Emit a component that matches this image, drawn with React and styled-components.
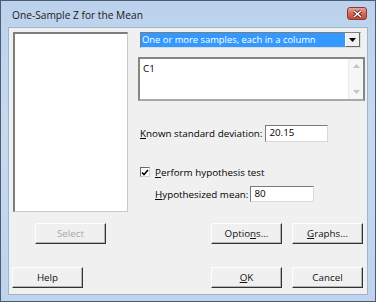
import React from 'react';
import styled, { createGlobalStyle } from 'styled-components';

const Global = createGlobalStyle`
  html, body { margin: 0; padding: 0; background: #fff; }
  * { box-sizing: border-box; }
`;

const Window = styled.div`
  width: 376px;
  height: 302px;
  border: 1px solid #4a5d75;
  background: linear-gradient(#bcd2ec, #c6d9ef 40%, #bfd4ec);
  padding: 0 7px 6px 7px;
  display: flex;
  flex-direction: column;
  font-family: "Open Sans", "Noto Sans", sans-serif;
  font-size: 9.8px;
  color: #000;
`;

const TitleBar = styled.div`
  height: 26px;
  display: flex;
  align-items: center;
  padding-left: 4px;
  padding-right: 1px;
`;

const Title = styled.div`
  flex: 1;
  font-size: 10.2px;
  color: #1a1a1a;
  margin-top: 1px;
`;

const CloseBtn = styled.div`
  width: 20px;
  height: 13px;
  margin-top: -1px;
  border: 1px solid #8a3a34;
  border-radius: 3px;
  background: linear-gradient(#e8a699, #d26a5a 50%, #c44b3a);
  display: flex;
  align-items: center;
  justify-content: center;
`;

const Client = styled.div`
  flex: 1;
  background: #f0f0f0;
  border: 1px solid #9fb4cd;
  display: flex;
  flex-direction: column;
`;

const Main = styled.div`
  display: grid;
  grid-template-columns: 115px 227px;
  column-gap: 10px;
  padding: 4px 2px 0 4px;
`;

const ListBox = styled.div`
  height: 180px;
  background: #fff;
  border-style: solid;
  border-width: 2px 1px 1px 2px;
  border-color: #7d7d7d #c8c8c8 #c8c8c8 #7d7d7d;
`;

const Right = styled.div`
  display: flex;
  flex-direction: column;
`;

const Combo = styled.div`
  margin-left: 2px;
  width: 221px;
  height: 16px;
  display: flex;
  background: #fff;
  border-style: solid;
  border-width: 1px;
  border-color: #7d7d7d #dcdcdc #dcdcdc #7d7d7d;
`;

const ComboText = styled.div`
  flex: 1;
  background: #3399ff;
  color: #fff;
  font-size: 9.4px;
  line-height: 14px;
  padding-left: 1px;
  white-space: nowrap;
  overflow: hidden;
`;

const ComboBtn = styled.div`
  width: 15px;
  background: #f0f0f0;
  border-left: 1px solid #fff;
  border-right: 1px solid #6a6a6a;
  border-bottom: 1px solid #6a6a6a;
  display: flex;
  align-items: center;
  justify-content: center;
`;

const Memo = styled.div`
  margin-top: 9px;
  height: 44px;
  background: #fff;
  border: 2px solid #858585;
  border-bottom-color: #a8a8a8;
  display: flex;
`;

const MemoText = styled.div`
  flex: 1;
  padding: 3px 0 0 3px;
`;

const ScrollBar = styled.div`
  width: 15px;
  background: #f6f6f6;
  border-left: 1px solid #ececec;
  display: flex;
  flex-direction: column;
  justify-content: space-between;
  align-items: center;
  padding: 5px 0 5px;
`;

const Row = styled.div`
  display: flex;
  align-items: center;
  margin-top: ${p => p.$top}px;
  padding-left: ${p => p.$indent}px;
  height: ${p => p.$h}px;
`;

const Field = styled.div`
  width: ${p => p.$w}px;
  height: 100%;
  margin-left: ${p => p.$gap}px;
  background: #fff;
  border-style: solid;
  border-width: 1px;
  border-color: #7a7a7a #d8d8d8 #d8d8d8 #7a7a7a;
  padding-left: 3px;
  line-height: 14px;
`;

const CheckBox = styled.div`
  width: 10px;
  height: 10px;
  background: #fff;
  border-style: solid;
  border-width: 1px;
  border-color: #6a6a6a #d0d0d0 #d0d0d0 #6a6a6a;
  margin-right: 5px;
  display: flex;
  align-items: center;
  justify-content: center;
`;

const ButtonRow = styled.div`
  display: flex;
  gap: 10px;
  margin-top: ${p => p.$top}px;
  padding: 0 4px 0 ${p => p.$left}px;
`;

const Spacer = styled.div`
  flex: 1;
`;

const Button = styled.div`
  width: 71px;
  height: 21px;
  background: #f0f0f0;
  border-style: solid;
  border-width: 1px;
  border-color: #fdfdfd #333 #333 #fdfdfd;
  box-shadow: inset -1px -1px 0 #b4b4b4;
  display: flex;
  align-items: center;
  justify-content: center;
  color: ${p => (p.$disabled ? '#a8a8a8' : '#111')};
`;

const Arrow = ({ dir, color }) => (
  <svg width="7" height="4" viewBox="0 0 7 4">
    {dir === 'up'
      ? <path d="M0 4 L3.5 0 L7 4 Z" fill={color} />
      : <path d="M0 0 L7 0 L3.5 4 Z" fill={color} />}
  </svg>
);

export default function App() {
  return (
    <>
      <Global />
      <Window>
        <TitleBar>
          <Title>One-Sample Z for the Mean</Title>
          <CloseBtn>
            <svg width="9" height="8" viewBox="0 0 9 8">
              <path d="M1 1 L8 7 M8 1 L1 7" stroke="#5a1f18" strokeWidth="3" />
              <path d="M1 1 L8 7 M8 1 L1 7" stroke="#fff" strokeWidth="1.6" />
            </svg>
          </CloseBtn>
        </TitleBar>
        <Client>
          <Main>
            <ListBox />
            <Right>
              <Combo>
                <ComboText>One or more samples, each in a column</ComboText>
                <ComboBtn><Arrow dir="down" color="#000" /></ComboBtn>
              </Combo>
              <Memo>
                <MemoText>C1</MemoText>
                <ScrollBar>
                  <Arrow dir="up" color="#c4c4c4" />
                  <Arrow dir="down" color="#c4c4c4" />
                </ScrollBar>
              </Memo>
              <Row $top={24} $indent={2} $h={17}>
                <span><u>K</u>nown standard deviation:</span>
                <Field $w={63} $gap={3}>20.15</Field>
              </Row>
              <Row $top={23} $indent={2} $h={14}>
                <CheckBox>
                  <svg width="8" height="7" viewBox="0 0 8 7">
                    <path d="M1 3.5 L3 5.5 L7 1" stroke="#000" strokeWidth="1.6" fill="none" />
                  </svg>
                </CheckBox>
                <span><u>P</u>erform hypothesis test</span>
              </Row>
              <Row $top={7} $indent={17} $h={16}>
                <span><u>H</u>ypothesized mean:</span>
                <Field $w={64} $gap={2}>80</Field>
              </Row>
            </Right>
          </Main>
          <ButtonRow $top={11} $left={26}>
            <Button $disabled>Select</Button>
            <Spacer />
            <Button>Optio<u>n</u>s...</Button>
            <Button><u>G</u>raphs...</Button>
          </ButtonRow>
          <ButtonRow $top={23} $left={3}>
            <Button>Help</Button>
            <Spacer />
            <Button><u>O</u>K</Button>
            <Button>Cancel</Button>
          </ButtonRow>
        </Client>
      </Window>
    </>
  );
}
